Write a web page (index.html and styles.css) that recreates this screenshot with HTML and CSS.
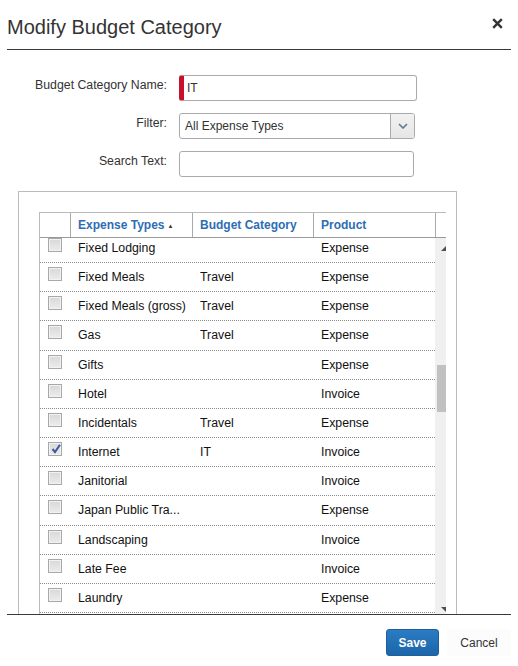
FILE: index.html
```html
<!DOCTYPE html>
<html>
<head>
<meta charset="utf-8">
<link rel="stylesheet" href="styles.css">
</head>
<body>
<div class="modal">
  <div class="modal-header">
    <h1 class="modal-title">Modify Budget Category</h1>
    <span class="close" aria-label="Close"><svg width="11" height="11" viewBox="0 0 11 11"><path d="M1.2 1.2 L9.8 9.8 M9.8 1.2 L1.2 9.8" stroke="#333" stroke-width="2.4" stroke-linecap="butt"/></svg></span>
  </div>
  <div class="modal-body">
    <div class="form">
      <label class="label">Budget Category Name:</label>
      <div class="field name-input">IT</div>
      <label class="label">Filter:</label>
      <div class="field select"><span class="select-text">All Expense Types</span><span class="select-btn"><svg width="10" height="6" viewBox="0 0 10 6"><path d="M1 1 L5 5 L9 1" fill="none" stroke="#5f7a96" stroke-width="1.6"/></svg></span></div>
      <label class="label">Search Text:</label>
      <div class="field search-input"></div>
    </div>
    <div class="box">
      <div class="grid">
        <div class="grid-head">
          <div class="hcell"></div>
          <div class="hcell sep">Expense Types<span class="sort">&#9650;</span></div>
          <div class="hcell sep">Budget Category</div>
          <div class="hcell sep">Product</div>
          <div class="hcell sep"></div>
        </div>
        <div class="grid-body">
          <div class="rows">
            <div class="row first"><div class="c-cb"><span class="cb"></span></div><div class="cell">Fixed Lodging</div><div class="cell"></div><div class="cell">Expense</div></div>
            <div class="row"><div class="c-cb"><span class="cb"></span></div><div class="cell">Fixed Meals</div><div class="cell">Travel</div><div class="cell">Expense</div></div>
            <div class="row"><div class="c-cb"><span class="cb"></span></div><div class="cell">Fixed Meals (gross)</div><div class="cell">Travel</div><div class="cell">Expense</div></div>
            <div class="row"><div class="c-cb"><span class="cb"></span></div><div class="cell">Gas</div><div class="cell">Travel</div><div class="cell">Expense</div></div>
            <div class="row"><div class="c-cb"><span class="cb"></span></div><div class="cell">Gifts</div><div class="cell"></div><div class="cell">Expense</div></div>
            <div class="row"><div class="c-cb"><span class="cb"></span></div><div class="cell">Hotel</div><div class="cell"></div><div class="cell">Invoice</div></div>
            <div class="row"><div class="c-cb"><span class="cb"></span></div><div class="cell">Incidentals</div><div class="cell">Travel</div><div class="cell">Expense</div></div>
            <div class="row"><div class="c-cb"><span class="cb checked"><svg width="12" height="12" viewBox="0 0 12 12"><path d="M2.5 6 L5 9 L10 1.8" fill="none" stroke="#3d5a99" stroke-width="2"/></svg></span></div><div class="cell">Internet</div><div class="cell">IT</div><div class="cell">Invoice</div></div>
            <div class="row"><div class="c-cb"><span class="cb"></span></div><div class="cell">Janitorial</div><div class="cell"></div><div class="cell">Invoice</div></div>
            <div class="row"><div class="c-cb"><span class="cb"></span></div><div class="cell">Japan Public Tra...</div><div class="cell"></div><div class="cell">Expense</div></div>
            <div class="row"><div class="c-cb"><span class="cb"></span></div><div class="cell">Landscaping</div><div class="cell"></div><div class="cell">Invoice</div></div>
            <div class="row"><div class="c-cb"><span class="cb"></span></div><div class="cell">Late Fee</div><div class="cell"></div><div class="cell">Invoice</div></div>
            <div class="row"><div class="c-cb"><span class="cb"></span></div><div class="cell">Laundry</div><div class="cell"></div><div class="cell">Expense</div></div>
          </div>
          <div class="scrollbar">
            <svg class="arrow-up" width="5" height="5" viewBox="0 0 5 5"><polygon points="0,5 5,5 5,0" fill="#505050"/></svg>
            <div class="thumb"></div>
            <svg class="arrow-down" width="5" height="5" viewBox="0 0 5 5"><polygon points="0,0 5,0 5,5" fill="#505050"/></svg>
          </div>
        </div>
      </div>
    </div>
  </div>
  <div class="modal-footer">
    <button class="btn btn-primary">Save</button>
    <button class="btn btn-link">Cancel</button>
  </div>
</div>
</body>
</html>
```

FILE: styles.css
```css
* { box-sizing: border-box; }
html, body { margin: 0; padding: 0; background: #fff; }
body { font-family: "Liberation Sans", Arial, sans-serif; color: #333; }

.modal { width: 518px; height: 666px; display: flex; flex-direction: column; overflow: hidden; }

.modal-header {
  margin: 0 7px;
  height: 50px;
  flex: none;
  border-bottom: 1px solid #3a3a3a;
  display: flex;
  justify-content: space-between;
  align-items: flex-start;
  padding-top: 16px;
}
.modal-title { margin: 0; font-size: 20px; line-height: 23px; font-weight: normal; color: #333; }
.close { display: block; width: 11px; height: 11px; margin-top: 2px; margin-right: 8px; }
.close svg { display: block; }

.modal-body { height: 564px; flex: none; overflow: hidden; padding-top: 25px; }

.form {
  display: grid;
  grid-template-columns: 167px auto;
  column-gap: 12px;
  row-gap: 12px;
  align-items: start;
}
.label { text-align: right; font-size: 12.3px; line-height: 14px; padding-top: 3px; color: #333; }
.field {
  height: 26px;
  border: 1px solid #aaa;
  border-radius: 3px;
  font-size: 12px;
  line-height: 24px;
  color: #333;
  background: #fff;
}
.name-input { width: 238px; border-left: 5px solid #c8102e; padding-left: 3px; }
.select { width: 236px; display: flex; overflow: hidden; }
.select-text { flex: 1; padding-left: 5px; }
.select-btn {
  width: 24px;
  border-left: 1px solid #aaa;
  background: linear-gradient(#f2f2f2, #e6e6e6);
  display: flex;
  align-items: center;
  justify-content: center;
}
.select-btn svg { display: block; }
.search-input { width: 235px; }

.box {
  margin: 14px 0 0 18px;
  width: 439px;
  height: 520px;
  border: 1px solid #bbb;
  padding: 20px 0 0 20px;
}

.grid { width: 407px; border-left: 1px solid #bbb; }
.grid-head {
  display: grid;
  grid-template-columns: 30px 122px 121px 122px 11px;
  height: 26px;
  border-top: 1px solid #bbb;
  border-bottom: 1px solid #9a9a9a;
}
.hcell {
  height: 24px;
  line-height: 24px;
  font-size: 12px;
  font-weight: bold;
  color: #2d6db5;
  padding-left: 7px;
  white-space: nowrap;
}
.hcell.sep { border-left: 1px solid #aaa; }
.sort { font-size: 6px; color: #333; margin-left: 3px; vertical-align: 1px; }

.grid-body { display: flex; height: 376px; }
.rows { width: 395px; overflow: hidden; }
.row {
  display: grid;
  grid-template-columns: 30px 122px 121px 122px;
  height: 29.17px;
  border-bottom: 1px dotted #8a8a8a;
}
.row.first { margin-top: -4px; }
.c-cb { padding: 4px 0 0 8px; }
.cb {
  display: block;
  width: 14px;
  height: 14px;
  border: 1px solid #a8a8a8;
  background: linear-gradient(#d8d8d8, #ececec);
  box-shadow: inset 0 0 0 1px #f2f2f2;
  position: relative;
}
.cb svg { position: absolute; left: 1px; top: 0; }
.cell {
  font-size: 12.3px;
  line-height: 28px;
  color: #111;
  padding-left: 8px;
  white-space: nowrap;
  overflow: hidden;
}

.scrollbar { width: 11px; background: #f0f0f0; position: relative; }
.thumb { position: absolute; left: 2px; right: 0; top: 127px; height: 47px; background: #c1c1c1; }
.arrow-up { position: absolute; left: 6px; top: 8px; }
.arrow-down { position: absolute; left: 6px; top: 369px; }

.modal-footer {
  margin: 0 7px;
  flex: none;
  border-top: 1px solid #3a3a3a;
  display: flex;
  justify-content: flex-end;
  gap: 8px;
  padding-top: 14px;
}
.btn {
  height: 27px;
  font-family: "Liberation Sans", Arial, sans-serif;
  font-size: 12px;
  border-radius: 3px;
  padding: 0;
  cursor: pointer;
}
.btn-primary {
  width: 53px;
  color: #fff;
  font-weight: bold;
  border: 1px solid #1b5f9f;
  background: linear-gradient(#2a7cc3, #1c65a8);
}
.btn-link {
  width: 64px;
  color: #333;
  border: none;
  background: #fcfcfc;
}
```
